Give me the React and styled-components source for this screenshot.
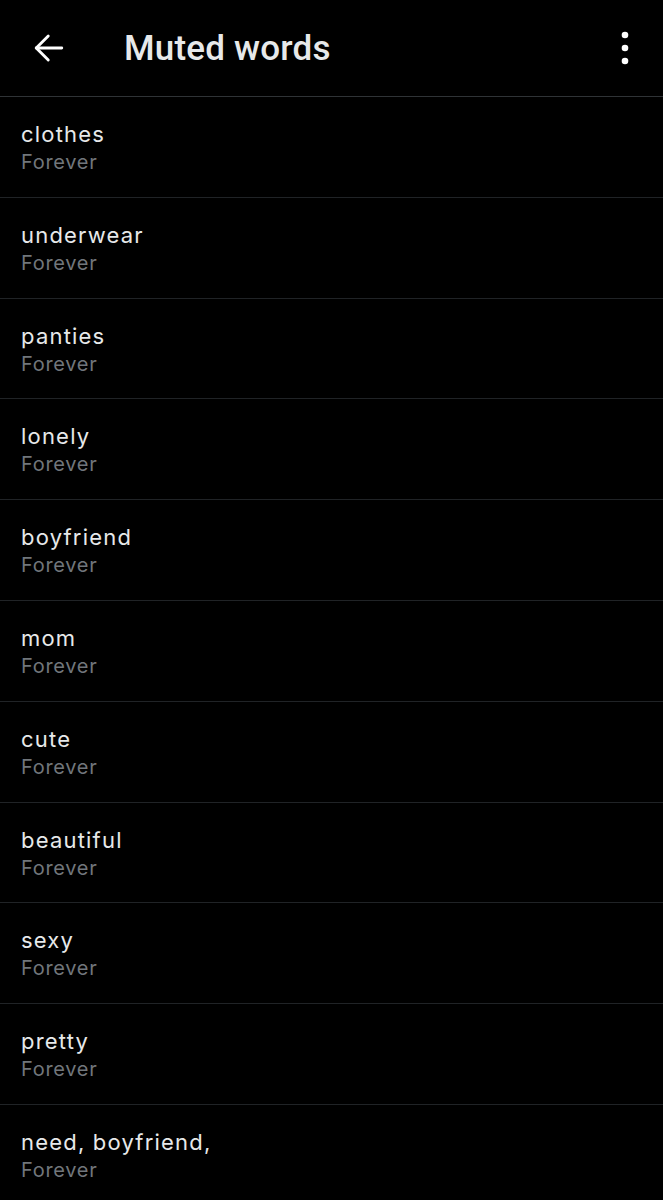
import { createGlobalStyle, styled } from "styled-components";

const GlobalStyle = createGlobalStyle`
  html, body {
    margin: 0;
    padding: 0;
    background: #000;
  }
`;

const Page = styled.div`
  background: #000;
  min-height: 1200px;
  font-family: Inter, "Noto Sans", sans-serif;
`;

const Header = styled.header`
  height: 97px;
  box-sizing: border-box;
  display: flex;
  align-items: center;
  border-bottom: 1px solid #2f3336;
  padding: 0 18px 0 30px;
`;

const IconButton = styled.button`
  background: none;
  border: 0;
  padding: 0;
  width: 38px;
  height: 38px;
  display: flex;
  align-items: center;
  justify-content: center;
  color: #fff;
`;

const Title = styled.h1`
  flex: 1;
  margin: 0 0 0 56px;
  font-family: Roboto, "Liberation Sans", sans-serif;
  font-weight: 500;
  font-size: 35px;
  color: #e7e9ea;
  letter-spacing: 0.2px;
`;

const List = styled.ul`
  list-style: none;
  margin: 0;
  padding: 0;
`;

const Row = styled.li`
  height: 100.8px;
  box-sizing: border-box;
  border-bottom: 1px solid #202326;
  padding: 23px 21px 0;
  display: flex;
  flex-direction: column;
`;

const Word = styled.span`
  font-size: 22px;
  line-height: 28px;
  letter-spacing: 1.2px;
  color: #e7e9ea;
`;

const Duration = styled.span`
  font-size: 20px;
  line-height: 28px;
  letter-spacing: 0.7px;
  color: #71767b;
`;

const words = [
  "clothes",
  "underwear",
  "panties",
  "lonely",
  "boyfriend",
  "mom",
  "cute",
  "beautiful",
  "sexy",
  "pretty",
  "need, boyfriend,",
];

function App() {
  return (
    <Page>
      <GlobalStyle />
      <Header>
        <IconButton aria-label="Back">
          <svg width="36" height="36" viewBox="0 0 24 24" fill="none" stroke="currentColor" strokeWidth="1.9" strokeLinecap="round" strokeLinejoin="round">
            <path d="M20.5 12H3.5" />
            <path d="M11.5 4l-8 8 8 8" />
          </svg>
        </IconButton>
        <Title>Muted words</Title>
        <IconButton aria-label="More">
          <svg width="30" height="34" viewBox="0 0 30 34" fill="currentColor">
            <circle cx="14" cy="4" r="3.3" />
            <circle cx="14" cy="17" r="3.3" />
            <circle cx="14" cy="30" r="3.3" />
          </svg>
        </IconButton>
      </Header>
      <List>
        {words.map((w, i) => (
          <Row key={i}>
            <Word>{w}</Word>
            <Duration>Forever</Duration>
          </Row>
        ))}
      </List>
    </Page>
  );
}

export default App;
